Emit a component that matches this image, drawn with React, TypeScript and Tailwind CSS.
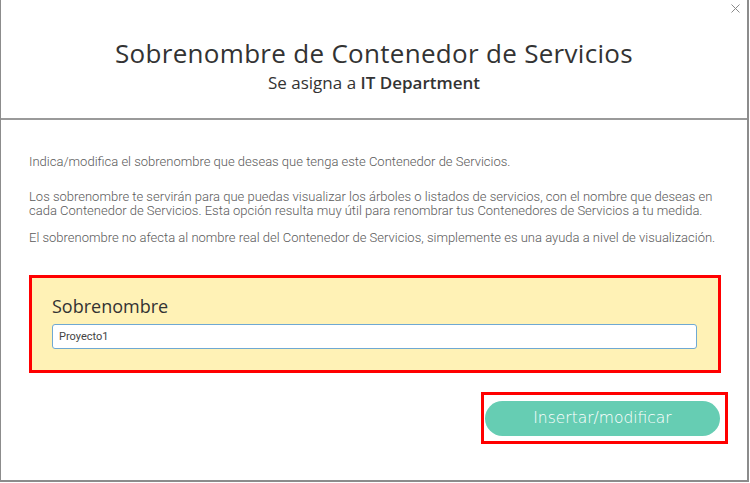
import React from 'react'

const App = () => {
  return (
    <div className="w-[750px] h-[483px] bg-white relative overflow-hidden">
      <div className="w-[749px] h-[482px] border-l border-r-2 border-b-2 border-[#8c8c8c] bg-white relative flex flex-col">
        <button className="absolute right-[7px] top-[4px] text-[#8a8a8a]">
          <svg width="9" height="9" viewBox="0 0 9 9" fill="none" stroke="currentColor" strokeWidth="1">
            <path d="M0.5 0.5 L8.5 8.5 M8.5 0.5 L0.5 8.5" />
          </svg>
        </button>

        <div className="h-[120px] flex flex-col items-center justify-center pt-[14px] border-b-2 border-[#9a9a9a] font-['Open_Sans',sans-serif] text-[#333]">
          <h1 className="text-[26px] tracking-[0.3px] leading-[32px]">Sobrenombre de Contenedor de Servicios</h1>
          <p className="text-[17px] mt-[2px] leading-[24px]">
            Se asigna a <span className="font-semibold">IT Department</span>
          </p>
        </div>

        <div className="px-[28px] pt-[35px] font-['Roboto',sans-serif] text-[13px] font-light text-[#5a5a5a] leading-[14px]">
          <p>Indica/modifica el sobrenombre que deseas que tenga este Contenedor de Servicios.</p>
          <p className="mt-[21px]">
            Los sobrenombre te servirán para que puedas visualizar los árboles o listados de servicios, con el nombre que deseas en cada Contenedor de Servicios. Esta opción resulta muy útil para renombrar tus Contenedores de Servicios a tu medida.
          </p>
          <p className="mt-[13px]">
            El sobrenombre no afecta al nombre real del Contenedor de Servicios, simplemente es una ayuda a nivel de visualización.
          </p>

          <div className="mt-[30px] w-[692px] h-[98px] border-[3px] border-[#ff0000] bg-[#fff2b6] px-[20px] pt-[17px]">
            <label className="block font-['Open_Sans',sans-serif] text-[18px] text-[#333] font-normal leading-[22px]">Sobrenombre</label>
            <input
              defaultValue="Proyecto1"
              className="mt-[7px] w-[645px] h-[25px] bg-white border border-[#6fa9d3] rounded-[3px] px-[6px] text-[11px] text-[#444] font-['Roboto',sans-serif] font-normal outline-none"
            />
          </div>

          <div className="flex justify-end mt-[19px] mr-[-9px]">
            <div className="w-[247px] h-[52px] border-[3px] border-[#ff0000] flex items-center justify-start pl-[1px]">
              <button className="w-[235px] h-[35px] rounded-full bg-[#66cdb3] text-white text-[15.5px] font-['DejaVu_Sans',sans-serif]">
                Insertar/modificar
              </button>
            </div>
          </div>
        </div>
      </div>
    </div>
  )
}

export default App
